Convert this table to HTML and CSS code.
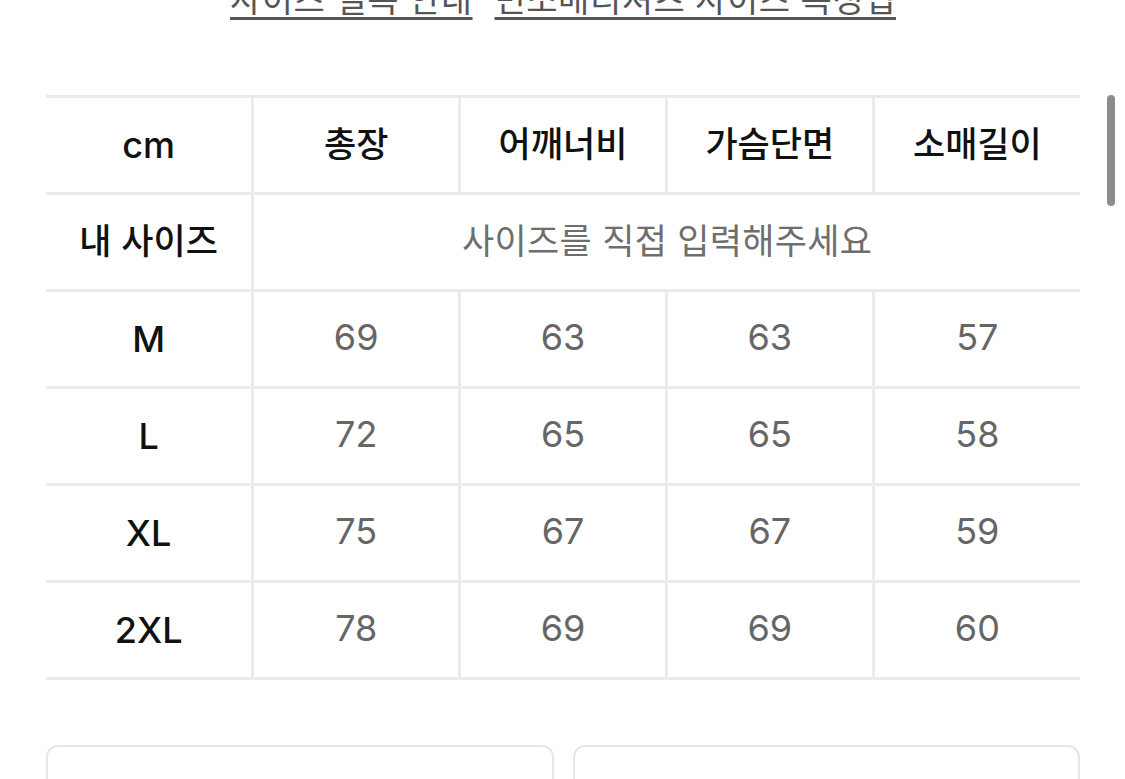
FILE: index.html
```html
<!DOCTYPE html>
<html lang="ko">
<head>
<meta charset="utf-8">
<title>사이즈 표</title>
<link rel="stylesheet" href="styles.css">
</head>
<body>
<div class="page">
  <nav class="links">
    <a class="link" href="#">사이즈 실측 안내</a>
    <a class="link" href="#">민소매티셔츠 사이즈 측정법</a>
  </nav>

  <table class="size-table">
    <tr>
      <th class="label">cm</th>
      <th class="head">총장</th>
      <th class="head">어깨너비</th>
      <th class="head">가슴단면</th>
      <th class="head">소매길이</th>
    </tr>
    <tr>
      <th class="label ko">내 사이즈</th>
      <td class="placeholder" colspan="4">사이즈를 직접 입력해주세요</td>
    </tr>
    <tr>
      <th class="label">M</th>
      <td class="val">69</td><td class="val">63</td><td class="val">63</td><td class="val">57</td>
    </tr>
    <tr>
      <th class="label">L</th>
      <td class="val">72</td><td class="val">65</td><td class="val">65</td><td class="val">58</td>
    </tr>
    <tr>
      <th class="label">XL</th>
      <td class="val">75</td><td class="val">67</td><td class="val">67</td><td class="val">59</td>
    </tr>
    <tr>
      <th class="label">2XL</th>
      <td class="val">78</td><td class="val">69</td><td class="val">69</td><td class="val">60</td>
    </tr>
  </table>

  <div class="actions">
    <button class="action">실측 사이즈 비교하기</button>
    <button class="action">내 사이즈 추천받기</button>
  </div>
</div>
<div class="scrollbar"></div>
</body>
</html>
```

FILE: styles.css
```css
html, body {
  margin: 0;
  padding: 0;
  background: #ffffff;
  overflow: hidden;
}

body {
  font-family: Inter, "Noto Sans CJK KR", sans-serif;
  color: #111111;
}

.page {
  padding: 0 45px 0 46px;
}

.links {
  display: flex;
  justify-content: center;
  gap: 22px;
  margin-top: -18px;
  height: 32px;
  line-height: 32px;
  margin-bottom: 81px;
}

.link {
  font-family: "Noto Sans CJK KR", sans-serif;
  font-size: 34px;
  color: #555555;
  text-decoration: underline;
  text-decoration-thickness: 3px;
  text-underline-offset: 5px;
  letter-spacing: 0.5px;
}

.size-table {
  width: 1034px;
  border-collapse: collapse;
  table-layout: fixed;
}

.size-table th,
.size-table td {
  height: 94px;
  padding: 0;
  border: 3px solid #ebebeb;
  text-align: center;
  vertical-align: middle;
}

.size-table tr > :first-child {
  border-left: none;
}

.size-table tr > :last-child {
  border-right: none;
}

.label {
  font-family: Inter, sans-serif;
  font-size: 36px;
  font-weight: 500;
  color: #111111;
}

.size-table .label.ko,
.size-table .head {
  font-family: "Noto Sans CJK KR", sans-serif;
  font-size: 35px;
  font-weight: 500;
  color: #111111;
  height: 86px;
  padding-bottom: 8px;
}

.size-table .val {
  font-family: Inter, sans-serif;
  font-size: 36px;
  font-weight: 400;
  color: #666666;
  height: 90px;
  padding-bottom: 4px;
}

.size-table .placeholder {
  font-family: "Noto Sans CJK KR", sans-serif;
  font-size: 35px;
  font-weight: 400;
  color: #6e6e6e;
  height: 86px;
  padding-bottom: 8px;
  letter-spacing: 0.3px;
}

.actions {
  display: flex;
  gap: 19px;
  margin-top: 65px;
}

.action {
  flex: 1;
  height: 90px;
  background: #ffffff;
  border: 2px solid #e6e6e6;
  border-radius: 12px;
  font-family: "Noto Sans CJK KR", sans-serif;
  font-size: 34px;
  font-weight: 500;
  color: #111111;
  padding: 22px 0 0;
  display: flex;
  justify-content: center;
  align-items: flex-start;
}

.scrollbar {
  position: fixed;
  top: 95px;
  left: 1107px;
  width: 8px;
  height: 111px;
  border-radius: 4px;
  background: #8c8c8c;
}
```
